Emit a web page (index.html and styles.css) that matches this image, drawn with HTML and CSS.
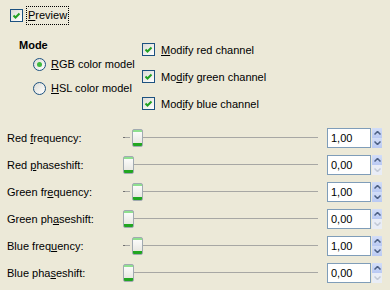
FILE: index.html
```html
<html>
<head>
    <title>Filter options</title>
    <link rel="stylesheet" href="styles.css">
</head>
<body>
    <div class="dialog">
        <div class="preview-row">
            <span class="check"><svg width="11" height="11" viewBox="0 0 11 11"><path d="M2.5 5.5 L4.5 7.5 L8.5 3.5" fill="none" stroke="#21a121" stroke-width="2"/></svg></span>
            <span class="focus-label"><u>P</u>review</span>
        </div>

        <div class="options">
            <div class="mode-col">
                <div class="mode-title">Mode</div>
                <div class="radio-row">
                    <span class="radio checked"></span>
                    <span><u>R</u>GB color model</span>
                </div>
                <div class="radio-row">
                    <span class="radio"></span>
                    <span><u>H</u>SL color model</span>
                </div>
            </div>
            <div class="channel-col">
                <div class="check-row">
                    <span class="check"><svg width="11" height="11" viewBox="0 0 11 11"><path d="M2.5 5.5 L4.5 7.5 L8.5 3.5" fill="none" stroke="#21a121" stroke-width="2"/></svg></span>
                    <span><u>M</u>odify red channel</span>
                </div>
                <div class="check-row">
                    <span class="check"><svg width="11" height="11" viewBox="0 0 11 11"><path d="M2.5 5.5 L4.5 7.5 L8.5 3.5" fill="none" stroke="#21a121" stroke-width="2"/></svg></span>
                    <span>Mo<u>d</u>ify green channel</span>
                </div>
                <div class="check-row">
                    <span class="check"><svg width="11" height="11" viewBox="0 0 11 11"><path d="M2.5 5.5 L4.5 7.5 L8.5 3.5" fill="none" stroke="#21a121" stroke-width="2"/></svg></span>
                    <span>Mod<u>i</u>fy blue channel</span>
                </div>
            </div>
        </div>

        <div class="params">
            <div class="param-row">
                <span class="param-label">Red <u>f</u>requency:</span>
                <div class="slider"><span class="track-start"></span><span class="thumb"></span><span class="track"></span></div>
                <div class="entry">1,00</div>
                <div class="spin"><span class="spin-up"><svg width="7" height="4" viewBox="0 0 7 4"><path d="M0.5 3.5 L3.5 0.5 L6.5 3.5" fill="none" stroke="#4d6185" stroke-width="1.5"/></svg></span><span class="spin-down"><svg width="7" height="4" viewBox="0 0 7 4"><path d="M0.5 0.5 L3.5 3.5 L6.5 0.5" fill="none" stroke="#4d6185" stroke-width="1.5"/></svg></span></div>
            </div>
            <div class="param-row">
                <span class="param-label">Red <u>p</u>haseshift:</span>
                <div class="slider"><span class="thumb"></span><span class="track"></span></div>
                <div class="entry">0,00</div>
                <div class="spin"><span class="spin-up"><svg width="7" height="4" viewBox="0 0 7 4"><path d="M0.5 3.5 L3.5 0.5 L6.5 3.5" fill="none" stroke="#4d6185" stroke-width="1.5"/></svg></span><span class="spin-down disabled"><svg width="7" height="4" viewBox="0 0 7 4"><path d="M0.5 0.5 L3.5 3.5 L6.5 0.5" fill="none" stroke="#c3cad6" stroke-width="1.5"/></svg></span></div>
            </div>
            <div class="param-row">
                <span class="param-label">Green fr<u>e</u>quency:</span>
                <div class="slider"><span class="track-start"></span><span class="thumb"></span><span class="track"></span></div>
                <div class="entry">1,00</div>
                <div class="spin"><span class="spin-up"><svg width="7" height="4" viewBox="0 0 7 4"><path d="M0.5 3.5 L3.5 0.5 L6.5 3.5" fill="none" stroke="#4d6185" stroke-width="1.5"/></svg></span><span class="spin-down"><svg width="7" height="4" viewBox="0 0 7 4"><path d="M0.5 0.5 L3.5 3.5 L6.5 0.5" fill="none" stroke="#4d6185" stroke-width="1.5"/></svg></span></div>
            </div>
            <div class="param-row">
                <span class="param-label">Green ph<u>a</u>seshift:</span>
                <div class="slider"><span class="thumb"></span><span class="track"></span></div>
                <div class="entry">0,00</div>
                <div class="spin"><span class="spin-up"><svg width="7" height="4" viewBox="0 0 7 4"><path d="M0.5 3.5 L3.5 0.5 L6.5 3.5" fill="none" stroke="#4d6185" stroke-width="1.5"/></svg></span><span class="spin-down disabled"><svg width="7" height="4" viewBox="0 0 7 4"><path d="M0.5 0.5 L3.5 3.5 L6.5 0.5" fill="none" stroke="#c3cad6" stroke-width="1.5"/></svg></span></div>
            </div>
            <div class="param-row">
                <span class="param-label">Blue freq<u>u</u>ency:</span>
                <div class="slider"><span class="track-start"></span><span class="thumb"></span><span class="track"></span></div>
                <div class="entry">1,00</div>
                <div class="spin"><span class="spin-up"><svg width="7" height="4" viewBox="0 0 7 4"><path d="M0.5 3.5 L3.5 0.5 L6.5 3.5" fill="none" stroke="#4d6185" stroke-width="1.5"/></svg></span><span class="spin-down"><svg width="7" height="4" viewBox="0 0 7 4"><path d="M0.5 0.5 L3.5 3.5 L6.5 0.5" fill="none" stroke="#4d6185" stroke-width="1.5"/></svg></span></div>
            </div>
            <div class="param-row">
                <span class="param-label">Blue pha<u>s</u>eshift:</span>
                <div class="slider"><span class="thumb"></span><span class="track"></span></div>
                <div class="entry">0,00</div>
                <div class="spin"><span class="spin-up"><svg width="7" height="4" viewBox="0 0 7 4"><path d="M0.5 3.5 L3.5 0.5 L6.5 3.5" fill="none" stroke="#4d6185" stroke-width="1.5"/></svg></span><span class="spin-down disabled"><svg width="7" height="4" viewBox="0 0 7 4"><path d="M0.5 0.5 L3.5 3.5 L6.5 0.5" fill="none" stroke="#c3cad6" stroke-width="1.5"/></svg></span></div>
            </div>
        </div>
    </div>
</body>
</html>
```

FILE: styles.css
```css
body {
    margin: 0;
    background: #ece9d8;
    font-family: "Liberation Sans", Arial, sans-serif;
    font-size: 11px;
    color: #000;
}
.dialog {
    width: 390px;
    height: 290px;
    padding-top: 6px;
    box-sizing: border-box;
}
u {
    text-decoration: underline;
    text-underline-offset: 1px;
}

/* preview toggle */
.preview-row {
    display: flex;
    align-items: center;
    height: 19px;
    padding-left: 10px;
}
.focus-label {
    margin-left: 3px;
    padding: 0 1px;
    height: 17px;
    line-height: 17px;
    border: 1px dotted #000;
}

/* checkbox / radio */
.check {
    width: 11px;
    height: 11px;
    border: 1px solid #1c5180;
    background: linear-gradient(135deg, #dcdcd6 0%, #fff 100%);
    display: flex;
    flex-shrink: 0;
}
.radio {
    width: 11px;
    height: 11px;
    border: 1px solid #1c5180;
    border-radius: 50%;
    background: linear-gradient(135deg, #dcdcd6 0%, #fff 100%);
    display: flex;
    align-items: center;
    justify-content: center;
    flex-shrink: 0;
}
.radio.checked::after {
    content: "";
    width: 5px;
    height: 5px;
    border-radius: 50%;
    background: #3fba3f;
}

/* mode + channels */
.options {
    display: flex;
    margin-top: 11px;
}
.mode-col {
    width: 123px;
    padding-left: 19px;
}
.mode-title {
    font-weight: bold;
    height: 14px;
    line-height: 14px;
    margin-top: 2px;
}
.radio-row {
    display: flex;
    align-items: center;
    height: 24px;
    padding-left: 14px;
    gap: 5px;
}
.check-row {
    display: flex;
    align-items: center;
    height: 27px;
    gap: 6px;
}

/* parameter rows */
.params {
    margin-top: 7px;
    padding-left: 7px;
}
.param-row {
    display: flex;
    align-items: center;
    height: 27px;
}
.param-label {
    width: 116px;
}
.slider {
    width: 195px;
    height: 18px;
    display: flex;
    align-items: center;
}
.track-start {
    width: 7px;
    height: 1px;
    margin-right: 2px;
    background: linear-gradient(90deg, #707070 0 2px, #a7a7a4 2px);
}
.track {
    flex: 1;
    height: 1px;
    background: #a7a7a4;
}
.thumb {
    width: 9px;
    height: 16px;
    border: 1px solid #a1aab1;
    border-radius: 2px;
    background: linear-gradient(#8fe08f 0 2px, #fbfbfa 2px, #e8e8e2 13px, #21a621 13px);
    flex-shrink: 0;
}
.entry {
    margin-left: 9px;
    width: 39px;
    height: 18px;
    line-height: 18px;
    padding-left: 3px;
    border: 1px solid #7f9db9;
    background: #fff;
}
.spin {
    display: flex;
    flex-direction: column;
    width: 10px;
    height: 20px;
    margin-left: 1px;
}
.spin-up, .spin-down {
    flex: 1;
    display: flex;
    align-items: center;
    justify-content: center;
    background: linear-gradient(#d3def8, #b9c9f3);
}
.spin-down.disabled {
    background: #e9edf6;
}
```
